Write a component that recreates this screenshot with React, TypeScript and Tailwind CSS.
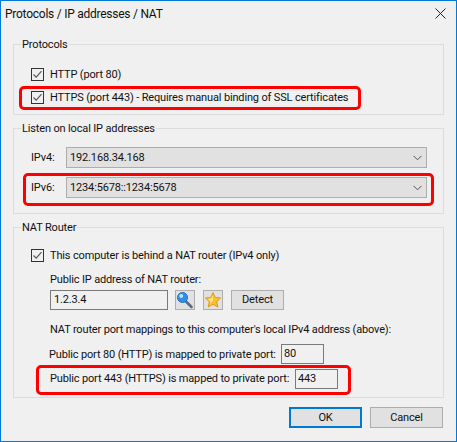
import React from 'react';

const Check = () => (
  <span className="relative w-[13px] h-[13px] border border-[#333333] bg-[#f0f0f0] shrink-0">
    <svg viewBox="0 0 11 11" className="absolute inset-0 w-[11px] h-[11px]" fill="none">
      <path d="M1.5 5.5 L4.2 8.2 L9.5 2.2" stroke="#555555" strokeWidth="1.1" />
    </svg>
  </span>
);

const Group: React.FC<{ title: string; className: string; children: React.ReactNode }> = ({ title, className, children }) => (
  <div className={`relative border border-[#dcdcdc] ${className}`}>
    <span className="absolute left-[7px] top-[-8px] bg-[#f0f0f0] px-[1px] leading-[16px]">{title}</span>
    {children}
  </div>
);

const Combo: React.FC<{ value: string }> = ({ value }) => (
  <div className="flex items-center justify-between w-[361px] h-[21px] border border-[#adadad] bg-[#e1e1e1] pl-[3px] pr-[3px]">
    <span>{value}</span>
    <svg width="9" height="6" viewBox="0 0 9 6" fill="none" className="mr-[1px]">
      <path d="M0.5 0.8 L4.5 4.8 L8.5 0.8" stroke="#555555" strokeWidth="1" />
    </svg>
  </div>
);

const IconButton: React.FC<{ children: React.ReactNode }> = ({ children }) => (
  <div className="flex items-center justify-center w-[20px] h-[20px] border border-[#adadad] bg-[#e1e1e1]">{children}</div>
);

const Highlight: React.FC<{ className: string }> = ({ className }) => (
  <div className={`absolute border-[3px] border-[#ff0000] rounded-[5px] pointer-events-none ${className}`} />
);

const App: React.FC = () => {
  return (
    <div className="relative w-[457px] h-[442px] overflow-hidden border border-[#0078d7] bg-[#f0f0f0] text-[11px] tracking-[-0.15px] leading-[16px] text-[#111111] font-['Roboto',sans-serif]">
      {/* Title bar */}
      <div className="flex items-center justify-between h-[25px] pl-[4px] pr-[5px]">
        <span className="text-[12px] tracking-[-0.25px]">Protocols / IP addresses / NAT</span>
        <svg width="11" height="11" viewBox="0 0 11 11" fill="none" className="mr-[5px]">
          <path d="M0.5 0.5 L10.5 10.5 M10.5 0.5 L0.5 10.5" stroke="#222222" strokeWidth="1" />
        </svg>
      </div>

      <div className="flex flex-col gap-[13px] px-[12px] pt-[18px]">
        <Group title="Protocols" className="h-[71px] pl-[17px] pt-[23px]">
          <div className="flex flex-col gap-[10px]">
            <div className="flex items-center gap-[6px] h-[13px]">
              <Check />
              <span>HTTP (port 80)</span>
            </div>
            <div className="flex items-center gap-[6px] h-[13px]">
              <Check />
              <span>HTTPS (port 443) - Requires manual binding of SSL certificates</span>
            </div>
          </div>
        </Group>

        <Group title="Listen on local IP addresses" className="h-[86px] pl-[17px] pt-[18px]">
          <div className="flex flex-col gap-[9px]">
            <div className="flex items-center">
              <span className="w-[35px]">IPv4:</span>
              <Combo value="192.168.34.168" />
            </div>
            <div className="flex items-center">
              <span className="w-[35px]">IPv6:</span>
              <Combo value="1234:5678::1234:5678" />
            </div>
          </div>
        </Group>

        <Group title="NAT Router" className="h-[171px] pl-[17px] pt-[21px]">
          <div className="flex items-center gap-[6px] h-[13px]">
            <Check />
            <span>This computer is behind a NAT router (IPv4 only)</span>
          </div>
          <div className="pl-[19px] mt-[10px]">
            <div>Public IP address of NAT router:</div>
            <div className="flex items-center mt-[2px]">
              <div className="flex items-center w-[118px] h-[20px] border border-[#7a7a7a] bg-[#f0f0f0] pl-[3px]">1.2.3.4</div>
              <div className="flex gap-[8px] ml-[7px]">
                <IconButton>
                  <svg width="18" height="18" viewBox="0 0 18 18">
                    <path d="M9.5 10 L15.5 16" stroke="#5a6a88" strokeWidth="2.6" strokeLinecap="round" />
                    <circle cx="6.5" cy="6.5" r="5" fill="#2f8fe8" stroke="#2a6fc0" strokeWidth="1" />
                    <circle cx="5.2" cy="5" r="2" fill="#bfe4ff" />
                  </svg>
                </IconButton>
                <IconButton>
                  <svg width="18" height="18" viewBox="0 0 18 18">
                    <path d="M9 1.5 L11.3 6.4 L16.6 7 L12.7 10.7 L13.8 16 L9 13.3 L4.2 16 L5.3 10.7 L1.4 7 L6.7 6.4 Z" fill="#f8c22e" stroke="#e09a18" strokeWidth="1" strokeLinejoin="round" />
                    <path d="M9 4 L7.5 7.6 L4 8 L6.5 10.4 L6 13 L9 9 Z" fill="#fde68a" />
                  </svg>
                </IconButton>
              </div>
              <div className="flex items-center justify-center w-[53px] h-[20px] ml-[8px] border border-[#adadad] bg-[#e1e1e1]">Detect</div>
            </div>
            <div className="mt-[12px]">NAT router port mappings to this computer's local IPv4 address (above):</div>
          </div>
          <div className="flex items-center h-[20px] mt-[6px] ml-[18px]">
            <span className="w-[232px] pt-[1px]">Public port 80 (HTTP) is mapped to private port:</span>
            <div className="flex items-center w-[43px] h-[20px] border border-[#7a7a7a] pl-[2px]">80</div>
          </div>
          <div className="flex items-center h-[20px] mt-[5px] ml-[19px]">
            <span className="w-[245px]">Public port 443 (HTTPS) is mapped to private port:</span>
            <div className="flex items-center w-[43px] h-[20px] border border-[#7a7a7a] pl-[2px]">443</div>
          </div>
        </Group>
      </div>

      {/* Buttons */}
      <div className="flex justify-end gap-[8px] mt-[9px] pr-[13px]">
        <div className="flex items-center justify-center w-[73px] h-[21px] pt-[1px] border-[2px] border-[#0078d7] bg-[#e1e1e1]">OK</div>
        <div className="flex items-center justify-center w-[73px] h-[21px] pt-[1px] border border-[#adadad] bg-[#e1e1e1]">Cancel</div>
      </div>

      {/* Red annotations drawn over the dialog */}
      <Highlight className="left-[18px] top-[85px] w-[342px] h-[24px]" />
      <Highlight className="left-[22px] top-[172px] w-[411px] h-[33px]" />
      <Highlight className="left-[35px] top-[364px] w-[315px] h-[30px]" />
    </div>
  );
};

export default App;
